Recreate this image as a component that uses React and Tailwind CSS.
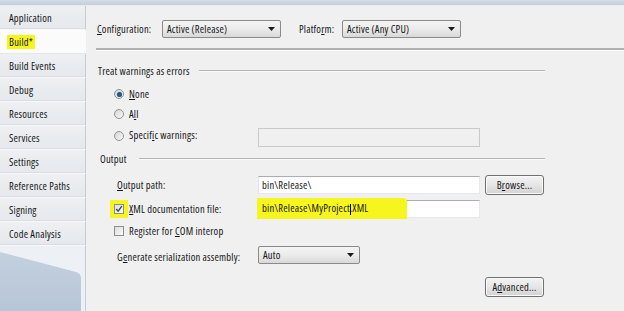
import React from "react";

const tabs = [
  "Application",
  "Build*",
  "Build Events",
  "Debug",
  "Resources",
  "Services",
  "Settings",
  "Reference Paths",
  "Signing",
  "Code Analysis",
];

function Arrow() {
  return (
    <svg width="7" height="4" viewBox="0 0 7 4" className="shrink-0">
      <path d="M0 0 H7 L3.5 4 Z" fill="#1a1a1a" />
    </svg>
  );
}

function Select({ value, width }) {
  return (
    <div
      className={`${width} h-[18px] flex items-center justify-between pl-[4px] pr-[5px] rounded-[2px] border border-[#8a8a8a] bg-gradient-to-b from-[#f4f4f4] via-[#ebebeb] to-[#d9d9d9]`}
    >
      <span>{value}</span>
      <Arrow />
    </div>
  );
}

function Button({ children }) {
  return (
    <div className="w-[59px] h-[20px] flex items-center justify-center rounded-[3px] border border-[#707070] bg-gradient-to-b from-[#f3f3f3] via-[#e6e6e6] to-[#d2d2d2] shadow-[inset_0_0_0_1px_#fbfbfb]">
      {children}
    </div>
  );
}

function Radio({ checked }) {
  return (
    <div className="w-[10px] h-[10px] rounded-full border border-[#939393] bg-gradient-to-br from-[#d4d4d4] to-[#fafafa] flex items-center justify-center shrink-0">
      {checked && <div className="w-[5px] h-[5px] rounded-full bg-[#25597f] shadow-[0_0_1px_#6fa6cc]" />}
    </div>
  );
}

function Check({ checked }) {
  return (
    <div className="w-[10px] h-[10px] border border-[#8e8e8e] bg-gradient-to-br from-[#dcdcdc] to-[#fbfbfb] flex items-center justify-center shrink-0">
      {checked && (
        <svg width="8" height="8" viewBox="0 0 8 8">
          <path d="M1.2 4 L3.2 6.2 L6.8 1.2" fill="none" stroke="#3b4a57" strokeWidth="1.4" />
        </svg>
      )}
    </div>
  );
}

function GroupHeader({ label, pad, gap }) {
  return (
    <div className={`flex items-center h-[14px] ${pad} pr-[79px]`}>
      <span className="whitespace-nowrap">{label}</span>
      <div className={`flex-1 ${gap} h-[2px] border-t border-[#b4b4b4] border-b border-b-[#fbfbfb]`} />
    </div>
  );
}

export default function App() {
  return (
    <div className="w-[624px] h-[311px] overflow-hidden flex flex-col bg-[#f0f0f0] text-[#161616] text-[10.5px] tracking-[0.2px] leading-none whitespace-nowrap font-['Open_Sans',sans-serif] font-stretch-[75%]">
      <div className="h-[6px] shrink-0 bg-gradient-to-b from-[#d3dce7] to-[#c2cedc] border-b border-[#e9edf2]" />
      <div className="flex flex-1">
        {/* sidebar */}
        <div className="w-[86px] flex flex-col bg-[#edf0f4]">
          {tabs.map((t) =>
            t === "Build*" ? (
              <div key={t} className="h-[24px] flex items-center pt-[1px] pl-[7px] bg-[#fbfbfb] border-b border-[#e3e6ea]">
                <span className="bg-[#f6f61e] px-[2px] py-[2px]">{t}</span>
              </div>
            ) : (
              <div
                key={t}
                className="h-[24px] flex items-center pt-[2px] pl-[9px] bg-gradient-to-b from-[#eef0f3] to-[#e5e8ec] border-b border-b-[#f8f9fa] border-r border-r-[#c7ccd3] shadow-[inset_0_-1px_0_#d9dde2]"
              >
                {t}
              </div>
            )
          )}
          <div className="flex-1 border-r border-[#c7ccd3]">
            <svg width="85" height="65" viewBox="0 0 85 65" className="block">
              <defs>
                <linearGradient id="sb" x1="0" y1="0" x2="0" y2="1">
                  <stop offset="0" stopColor="#c3d0de" />
                  <stop offset="1" stopColor="#b7c6d8" />
                </linearGradient>
              </defs>
              <path d="M0 6 L76 26 Q81 27.5 81 32 L81 65 L0 65 Z" fill="url(#sb)" />
            </svg>
          </div>
        </div>

        {/* panel */}
        <div className="flex-1 flex flex-col">
          <div className="flex items-center h-[18px] mt-[14px] pl-[11px]">
            <span className="w-[65px]">
              <u>C</u>onfiguration:
            </span>
            <Select value="Active (Release)" width="w-[119px]" />
            <span className="ml-[18px] w-[43px]">
              Platfo<u>r</u>m:
            </span>
            <Select value="Active (Any CPU)" width="w-[119px]" />
          </div>

          <div className="mt-[10px] ml-[10px] h-[3px] border-t-2 border-[#b0b0b0] border-b border-b-[#fafafa]" />

          <div className="mt-[13px]">
            <GroupHeader label="Treat warnings as errors" pad="pl-[12px]" gap="ml-[9px]" />
          </div>

          <div className="flex items-center h-[14px] mt-[9px] pl-[28px]">
            <Radio checked />
            <span className="ml-[5px]">
              <u>N</u>one
            </span>
          </div>
          <div className="flex items-center h-[14px] mt-[6px] pl-[28px]">
            <Radio />
            <span className="ml-[5px]">
              A<u>l</u>l
            </span>
          </div>
          <div className="flex items-center h-[19px] mt-[7px] pl-[28px]">
            <div className="w-[144px] flex items-center -mt-[4px]">
              <Radio />
              <span className="ml-[5px]">
                Specif<u>i</u>c warnings:
              </span>
            </div>
            <div className="w-[222px] h-[19px] border border-[#c9c9c9] bg-[#f0f0f0]" />
          </div>

          <div className="mt-[5px]">
            <GroupHeader label="Output" pad="pl-[14px]" gap="ml-[12px]" />
          </div>

          <div className="flex items-center h-[20px] mt-[9px] pl-[31px]">
            <span className="w-[141px]">
              <u>O</u>utput path:
            </span>
            <div className="w-[222px] h-[18px] flex items-center pl-[3px] bg-white border border-[#abadb3] border-l-[#e2e3ea] border-r-[#e3e9ef] border-b-[#e3e9ef]">
              bin\Release\
            </div>
            <div className="ml-[5px]">
              <Button>
                B<u>r</u>owse...
              </Button>
            </div>
          </div>

          <div className="flex items-center h-[18px] mt-[5px] pl-[28px]">
            <div className="w-[144px] flex items-center">
              <div className="relative flex items-center justify-center">
                <div className="absolute -inset-[4px] bg-[#f6f61e]" />
                <div className="relative">
                  <Check checked />
                </div>
              </div>
              <span className="ml-[5px]">
                <u>X</u>ML documentation file:
              </span>
            </div>
            <div className="relative w-[222px] h-[18px] flex items-center pl-[3px] bg-white border border-[#abadb3] border-l-[#e2e3ea] border-r-[#e3e9ef] border-b-[#e3e9ef]">
              <div className="absolute -left-[2px] -top-[3px] w-[150px] h-[21px] bg-[#f6f61e] rounded-tr-[4px]" />
              <span className="relative">
                bin\Release\MyProject<span className="inline-block w-px h-[11px] bg-black align-middle -mr-px" />.XML
              </span>
            </div>
          </div>

          <div className="flex items-center h-[14px] mt-[6px] pl-[28px]">
            <Check />
            <span className="ml-[5px]">
              Register for <u>C</u>OM interop
            </span>
          </div>

          <div className="flex items-center h-[18px] mt-[8px] pl-[31px]">
            <span className="w-[141px] mt-[4px]">
              G<u>e</u>nerate serialization assembly:
            </span>
            <Select value="Auto" width="w-[102px]" />
          </div>

          <div className="flex items-center h-[20px] mt-[13px] pl-[399px]">
            <Button>
              A<u>d</u>vanced...
            </Button>
          </div>
        </div>
      </div>
    </div>
  );
}
